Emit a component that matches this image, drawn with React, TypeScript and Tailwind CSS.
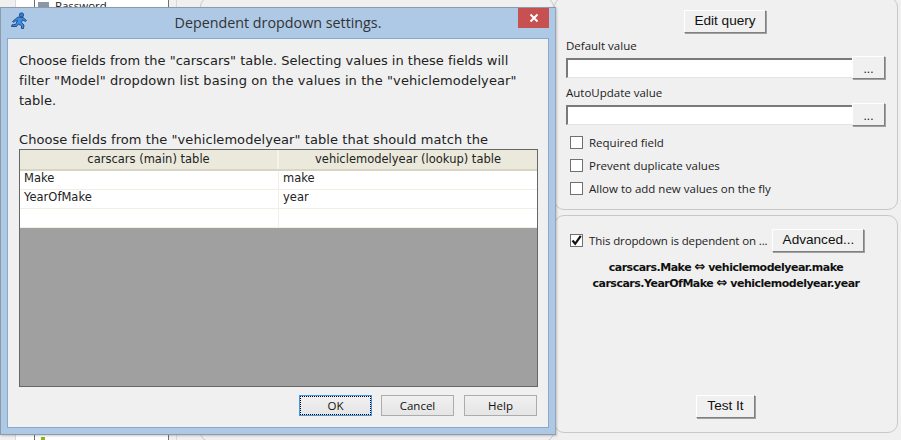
import React from 'react';

const tahoma = 'font-["DejaVu_Sans",sans-serif]';

const RaisedButton: React.FC<{ label: string; className: string }> = ({ label, className }) => (
  <button
    className={`flex items-center justify-center bg-[#f0f0f0] border border-t-white border-l-white border-r-[#808080] border-b-[#808080] shadow-[1px_1px_0_#a0a0a0] font-["Liberation_Sans",sans-serif] text-[13.6px] text-[#111] ${className}`}
  >
    {label}
  </button>
);

const ValueField: React.FC<{ label: string }> = ({ label }) => (
  <div className="flex flex-col">
    <span className="h-[17px] ml-[11px] font-['Open_Sans',sans-serif] text-[11.5px] leading-[17px] text-[#222]">{label}</span>
    <div className="flex items-center ml-[11px] mt-[2px] h-[23px]">
      <div className="w-[286px] h-[20px] bg-white border-2 border-t-[#7a7a7a] border-l-[#7a7a7a] border-r-0 border-b-[#e3e3e3] border-b-[1px]" />
      <RaisedButton label="..." className="w-[33px] h-[23px] !text-[12px] pt-[2px]" />
    </div>
  </div>
);

const CheckRow: React.FC<{ label: string; checked?: boolean; labelClass?: string }> = ({ label, checked, labelClass }) => (
  <div className="flex items-center h-[23px] ml-[15px]">
    <span className="relative w-[13px] h-[13px] bg-white border border-[#707070]">
      {checked && (
        <svg viewBox="0 0 13 13" className="absolute -left-px -top-px w-[13px] h-[13px]">
          <path d="M2.5 6.5 L5.2 9.8 L10.8 1.8" fill="none" stroke="#111" strokeWidth="2.2" />
        </svg>
      )}
    </span>
    <span className={`ml-[6px] font-['Open_Sans',sans-serif] text-[11.5px] text-[#222] ${labelClass ?? ''}`}>{label}</span>
  </div>
);

const rows = [
  ['Make', 'make'],
  ['YearOfMake', 'year'],
  ['', ''],
];

const RunnerIcon = () => (
  <svg viewBox="0 0 18 18" className="w-[18px] h-[18px]">
    <circle cx="11.5" cy="3" r="2.2" fill="#2f7fd6" stroke="#123a6e" strokeWidth="0.7" />
    <path
      d="M8 5 L13 5.5 L16.5 8.5 L15.5 9.5 L12.5 7.8 L11.5 10.5 L14 13 L13.5 16.5 L11.5 16.5 L11.5 13.8 L8.5 12 L6.5 14.5 L1.5 14.5 L2 12.8 L5.5 12.5 L7.5 8.5 L5.5 9 L3.5 10.5 L2.5 9.5 Z"
      fill="#3a8ee6"
      stroke="#123a6e"
      strokeWidth="0.8"
    />
  </svg>
);

const DialogButton: React.FC<{ label: string; focused?: boolean }> = ({ label, focused }) => (
  <button
    className={`w-[73px] h-[21px] flex items-center justify-center border bg-gradient-to-b from-[#f0f0f0] to-[#e5e5e5] font-['Open_Sans',sans-serif] text-[11.5px] text-[#111] ${
      focused ? 'border-[#3c9ae8] outline-1 outline-dotted outline-black -outline-offset-2' : 'border-[#acacac]'
    }`}
  >
    {label}
  </button>
);

const Dialog = () => (
  <div className="absolute left-0 top-[7px] w-[556px] h-[428px] flex flex-col bg-[#adc9e6] border border-[#8d9aa8] border-r-[#95a5b5] shadow-[1px_1px_2px_rgba(0,0,0,0.2)]">
    <div className="relative h-[30px] flex items-center justify-center shrink-0">
      <span className="absolute left-[9px] top-[4px]">
        <RunnerIcon />
      </span>
      <span className="font-['Open_Sans',sans-serif] text-[14.3px] text-[#333]">Dependent dropdown settings.</span>
      <button className="absolute right-[6px] top-0 w-[31px] h-[20px] bg-[#c75050] flex items-center justify-center">
        <svg viewBox="0 0 10 10" className="w-[10px] h-[10px]">
          <path d="M1.5 1.5 L8.5 8.5 M8.5 1.5 L1.5 8.5" stroke="#fff" strokeWidth="2" />
        </svg>
      </button>
    </div>
    <div className="mx-[6px] mb-[6px] flex-1 flex flex-col bg-[#f0f0f0] border border-[#8aa8c8] pl-[11px] pr-[9px] min-h-0">
      <div className={`${tahoma} mt-[12px] text-[13px] leading-[20px] text-[#222] h-[98px] overflow-visible whitespace-nowrap`}>
        <p className="tracking-[-0.01px]">Choose fields from the "carscars" table. Selecting values in these fields will</p>
        <p className="tracking-[0.1px]">filter "Model" dropdown list basing on the values in the "vehiclemodelyear"</p>
        <p>table.</p>
        <p className="mt-[19px] tracking-[0.07px]">Choose fields from the "vehiclemodelyear" table that should match the</p>
      </div>
      <div className="h-[238px] flex flex-col bg-[#a0a0a0] border border-[#666] mr-[1px]">
        <div className={`${tahoma} flex h-[21px] bg-[#ebe9dc] border-b-2 border-[#d8d5c4] text-[11.5px] text-[#222]`}>
          <div className="w-[259px] text-center leading-[18px] border-r-2 border-[#f5f4ec]">carscars (main) table</div>
          <div className="flex-1 text-center leading-[18px]">vehiclemodelyear (lookup) table</div>
        </div>
        {rows.map((row, index) => (
          <div key={index} className={`${tahoma} flex h-[19px] bg-white border-b border-[#f0efe3] text-[11.5px] text-[#222]`}>
            <div className="w-[259px] pl-[4px] leading-[15px] border-r border-[#f0efe3]">{row[0]}</div>
            <div className="flex-1 pl-[4px] leading-[15px]">{row[1]}</div>
          </div>
        ))}
      </div>
      <div className="flex justify-end mt-[8px] pr-[2px]">
        <DialogButton label="OK" focused />
        <div className="w-[9px]" />
        <DialogButton label="Cancel" />
        <div className="w-[10px]" />
        <DialogButton label="Help" />
      </div>
    </div>
  </div>
);

export default function App() {
  return (
    <div className="relative w-[901px] h-[440px] overflow-hidden bg-[#f0f0f0]">
      <div className="flex h-full">
        {/* left part, mostly covered by the dialog */}
        <div className="w-[554px] shrink-0 flex h-full">
          <div className="w-[16px] border-r border-[#d9d9d9]" />
          <div className="w-[18px] bg-white" />
          <div className="w-[135px] h-full bg-white border-x border-[#707070] flex flex-col justify-between">
            <div className="flex items-center -mt-[1px] pl-[3px]">
              <span className="w-[11px] h-[8px] bg-[#8a97a8]" />
              <span className="ml-[6px] font-['Open_Sans',sans-serif] text-[11.5px] leading-[14px] text-[#222]">Password</span>
            </div>
            <span className="ml-[6px] w-[4px] h-[3px] bg-[#8fb51e]" />
          </div>
          <div className="w-[8px] border-r border-[#d9d9d9]" />
          <div className="flex-1 ml-[23px] -mt-[3px] h-[445px] border border-[#c8c8c8] rounded-[10px]" />
        </div>
        <div className="w-[344px] h-full flex flex-col">
          <div className="-mt-[3px] h-[213px] border border-[#c8c8c8] rounded-[10px] flex flex-col">
            <RaisedButton label="Edit query" className="self-center mt-[12px] mr-[2px] w-[82px] h-[23px]" />
            <div className="mt-[4px] flex flex-col gap-[5px]">
              <ValueField label="Default value" />
              <ValueField label="AutoUpdate value" />
            </div>
            <div className="mt-[5px]">
              <CheckRow label="Required field" />
              <CheckRow label="Prevent duplicate values" />
              <CheckRow label="Allow to add new values on the fly" />
            </div>
          </div>
          <div className="mt-[5px] h-[218px] border border-[#c8c8c8] rounded-[10px] flex flex-col">
            <div className="flex items-center mt-[13px]">
              <CheckRow label="This dropdown is dependent on ..." labelClass="tracking-[-0.12px]" checked />
              <RaisedButton label="Advanced..." className="ml-[5px] w-[92px] h-[23px]" />
            </div>
            <div className="mt-[8px] text-center font-['DejaVu_Sans',sans-serif] font-bold text-[11px] leading-[16px] text-[#111] tracking-[-0.5px]">
              <p>carscars.Make <span className="text-[13px] leading-[10px]">⇔</span> vehiclemodelyear.make</p>
              <p>carscars.YearOfMake <span className="text-[13px] leading-[10px]">⇔</span> vehiclemodelyear.year</p>
            </div>
            <RaisedButton label="Test It" className="self-center mt-auto mb-[14px] mr-[1px] w-[59px] h-[23px]" />
          </div>
        </div>
      </div>
      <Dialog />
    </div>
  );
}
